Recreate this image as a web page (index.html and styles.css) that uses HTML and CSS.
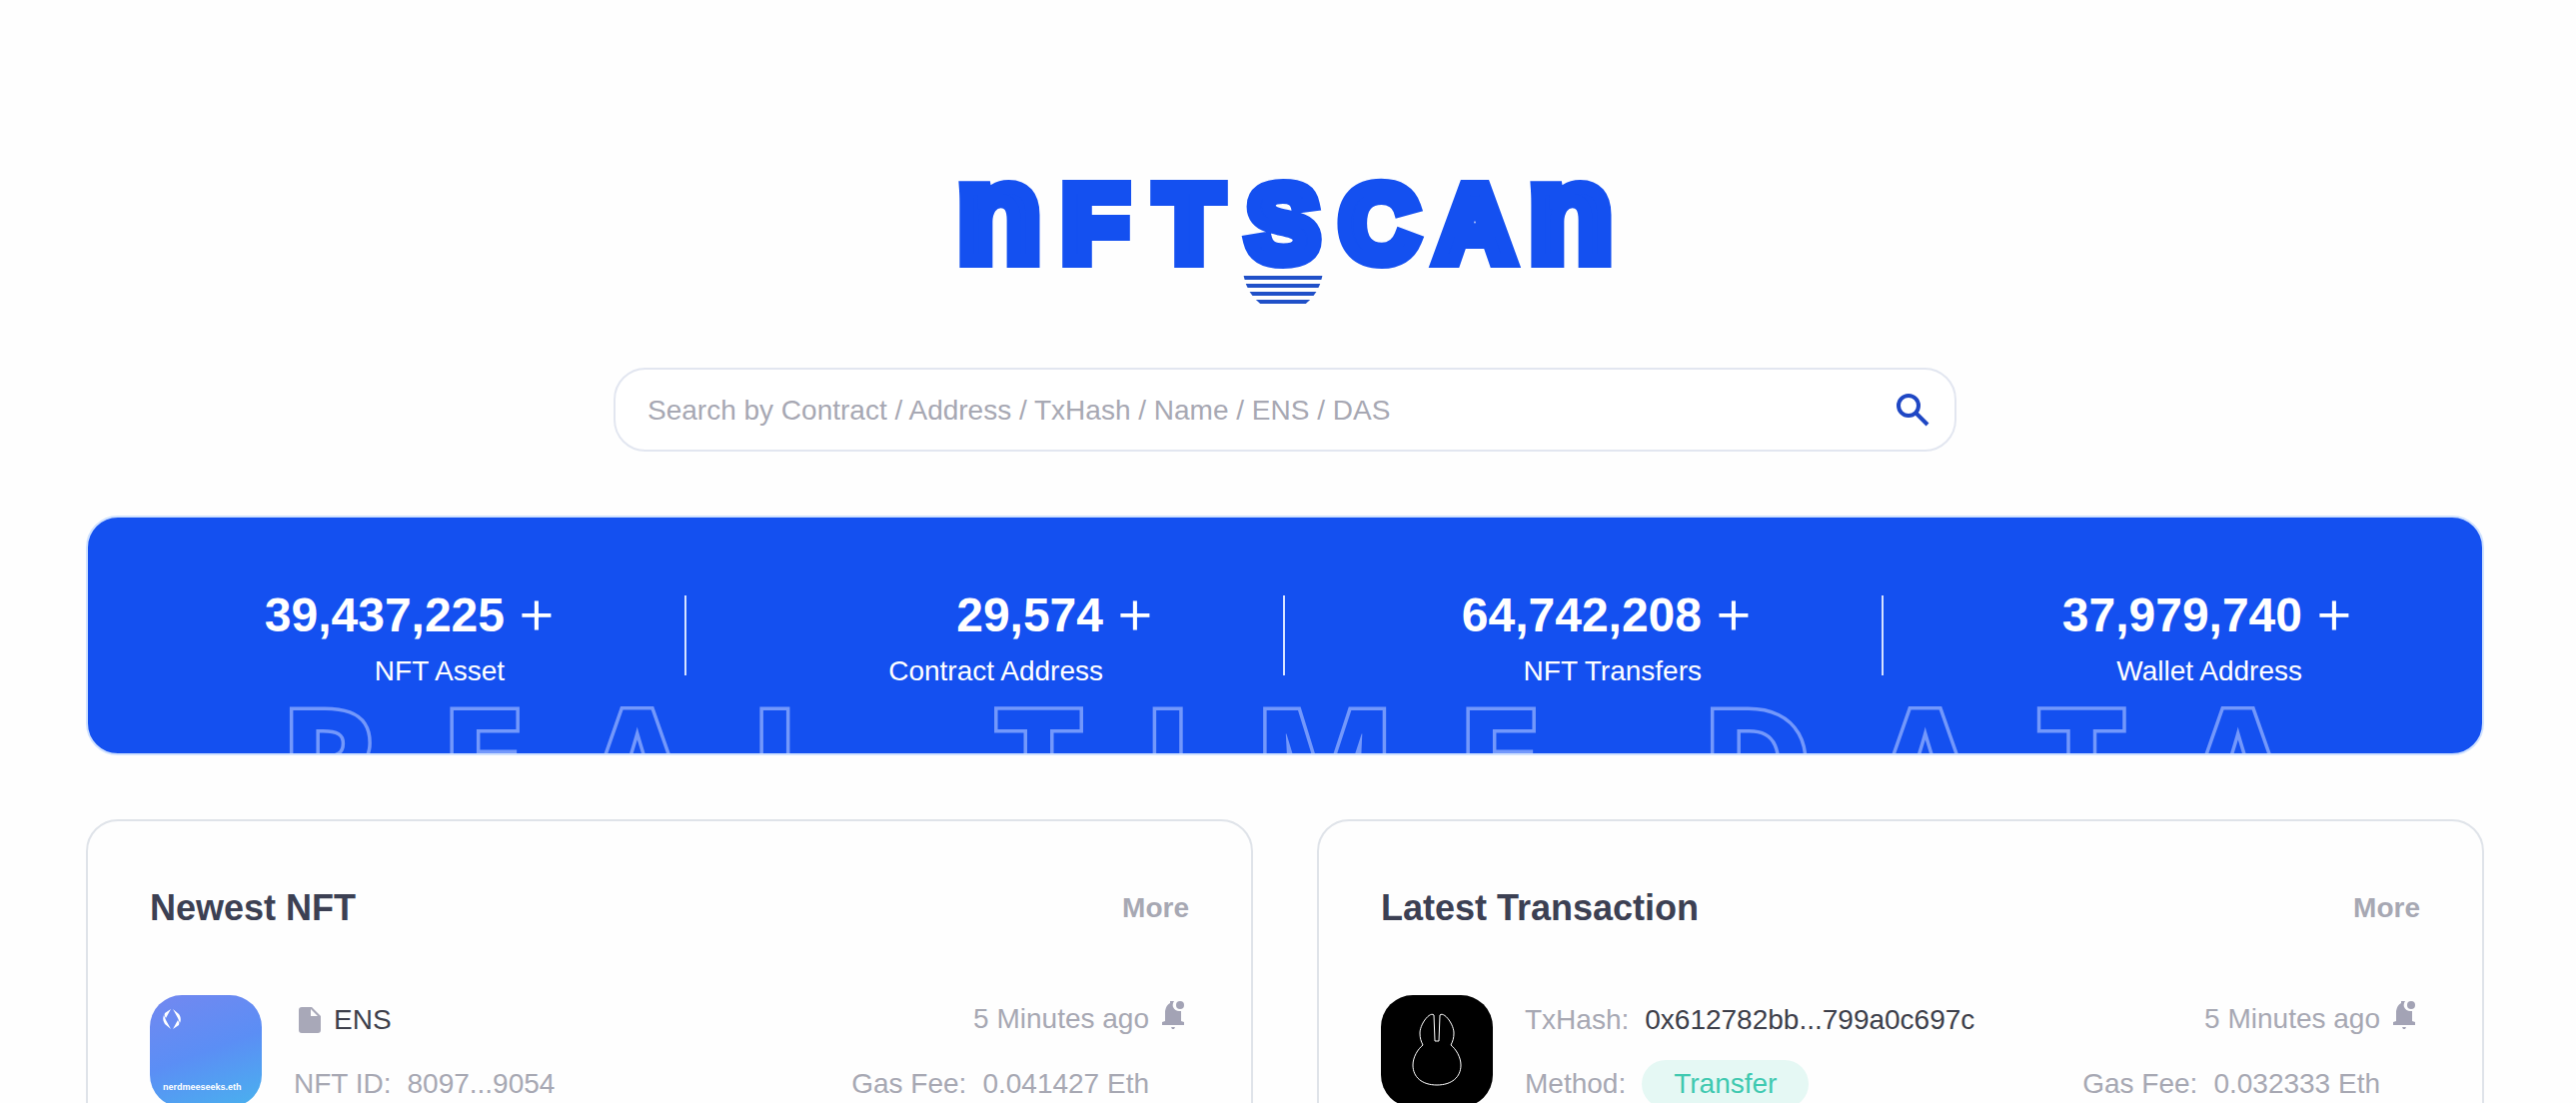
FILE: index.html
```html
<!DOCTYPE html>
<html lang="en">
<head>
    <meta charset="UTF-8">
    <meta name="viewport" content="width=device-width, initial-scale=1.0">
    <title>NFTScan</title>
    <link rel="stylesheet" href="styles.css">
</head>
<body>
    <main class="page">
        <h1 class="logo">
            <svg class="logo-svg" width="652" height="124" viewBox="0 0 652 124" role="img" aria-label="NFTScan">
                <defs>
                    <clipPath id="sun">
                        <ellipse cx="324" cy="88" rx="40" ry="44" />
                    </clipPath>
                </defs>
                <g class="logo-letters">
                    <text class="logo-arch" x="40" y="81">n</text>
                    <text x="136" y="81">F</text>
                    <text x="230" y="81">T</text>
                    <text x="324" y="81">S</text>
                    <text x="420" y="81">C</text>
                    <text x="516" y="81">A</text>
                    <text class="logo-arch" x="612" y="81">n</text>
                </g>
                <g clip-path="url(#sun)" fill="#2050c8">
                    <rect x="284" y="96" width="80" height="4" />
                    <rect x="284" y="104" width="80" height="4" />
                    <rect x="284" y="112" width="80" height="4" />
                    <rect x="284" y="120" width="80" height="4" />
                </g>
            </svg>
        </h1>

        <form class="search">
            <input class="search-input" type="text" aria-label="Search" placeholder="Search by Contract / Address / TxHash / Name / ENS / DAS">
            <button class="search-button" type="button" aria-label="Search">
                <svg width="36" height="36" viewBox="0 0 36 36" fill="none" stroke="#1f47c4" stroke-width="4">
                    <circle cx="14" cy="14" r="10" />
                    <path d="M21 21 L33 33" />
                </svg>
            </button>
        </form>

        <section class="stats">
            <div class="stats-backdrop">REAL TIME DATA</div>
            <div class="stat">
                <strong class="stat-number">39,437,225</strong>
                <span class="stat-plus">+</span>
                <span class="stat-label">NFT Asset</span>
            </div>
            <div class="stat">
                <strong class="stat-number">29,574</strong>
                <span class="stat-plus">+</span>
                <span class="stat-label">Contract Address</span>
            </div>
            <div class="stat">
                <strong class="stat-number">64,742,208</strong>
                <span class="stat-plus">+</span>
                <span class="stat-label">NFT Transfers</span>
            </div>
            <div class="stat">
                <strong class="stat-number">37,979,740</strong>
                <span class="stat-plus">+</span>
                <span class="stat-label">Wallet Address</span>
            </div>
        </section>

        <div class="cards">
            <section class="card">
                <div class="card-header">
                    <h2>Newest NFT</h2>
                    <a class="more" href="#">More</a>
                </div>
                <div class="item">
                    <div class="avatar avatar-ens">
                        <svg width="18" height="20" viewBox="0 0 18 20" fill="#fff">
                            <path d="M8 0 L3 9 Q1 6 2 4 Z" />
                            <path d="M1 6 L3 11 L8 20 L2 15 Q-1 11 1 6 Z" />
                            <path d="M10 0 L16 5 Q19 9 17 14 L15 9 Z" />
                            <path d="M10 20 L15 11 Q17 14 16 16 Z" />
                        </svg>
                        <span>nerdmeeseeks.eth</span>
                    </div>
                    <div class="item-main">
                        <div class="line line-token">
                            <svg width="22" height="26" viewBox="0 0 22 26">
                                <path fill="#a8a8b8" fill-rule="evenodd" d="M3 0 H13 L22 9 V23 Q22 26 19 26 H3 Q0 26 0 23 V3 Q0 0 3 0 Z M12 2 V9 H19 Z" />
                            </svg>
                            <a class="value" href="#">ENS</a>
                        </div>
                        <div class="line"><span>NFT ID:</span><span>8097...9054</span></div>
                    </div>
                    <div class="item-side">
                        <div class="line">5 Minutes ago</div>
                        <div class="line"><span>Gas Fee:</span><span>0.041427 Eth</span></div>
                    </div>
                    <button class="bell" type="button" aria-label="Notify">
                        <svg width="24" height="28" viewBox="0 0 24 28" fill="#a3a3b5">
                            <path d="M9 0 H13 Q11 3 12 6 Q14 10 18 10 H20 V20 L23 21 V24 H1 V21 L4 20 V10 Q5 4 9 2 Z" />
                            <circle cx="19" cy="4" r="4" />
                            <path d="M10 26 H14 L13 28 H11 Z" />
                        </svg>
                    </button>
                </div>
            </section>

            <section class="card">
                <div class="card-header">
                    <h2>Latest Transaction</h2>
                    <a class="more" href="#">More</a>
                </div>
                <div class="item">
                    <div class="avatar avatar-bunny">
                        <svg width="112" height="112" viewBox="0 0 112 112" fill="none" stroke="#fff" stroke-width="1">
                            <path d="M54 46 H58 L59 20 C63 16 73 29 73 38 C73 43 72 46 70 50 C75 54 80 62 80 70 C80 82 71 90 56 90 C41 90 32 82 32 70 C32 62 37 54 42 50 C40 46 39 43 39 38 C39 29 49 16 53 20 Z" />
                        </svg>
                    </div>
                    <div class="item-main">
                        <div class="line"><span>TxHash:</span><a class="value" href="#">0x612782bb...799a0c697c</a></div>
                        <div class="line"><span>Method:</span><span class="tag">Transfer</span></div>
                    </div>
                    <div class="item-side">
                        <div class="line">5 Minutes ago</div>
                        <div class="line"><span>Gas Fee:</span><span>0.032333 Eth</span></div>
                    </div>
                    <button class="bell" type="button" aria-label="Notify">
                        <svg width="24" height="28" viewBox="0 0 24 28" fill="#a3a3b5">
                            <path d="M9 0 H13 Q11 3 12 6 Q14 10 18 10 H20 V20 L23 21 V24 H1 V21 L4 20 V10 Q5 4 9 2 Z" />
                            <circle cx="19" cy="4" r="4" />
                            <path d="M10 26 H14 L13 28 H11 Z" />
                        </svg>
                    </button>
                </div>
            </section>
        </div>
    </main>
</body>
</html>
```
FILE: styles.css
```css
* {
    box-sizing: border-box;
}

body {
    margin: 0;
    background-color: #fefefe;
    color: #a7a8b3;
    font-family: "Liberation Sans", Arial, sans-serif;
    font-size: 28px;
    line-height: 32px;
}

a {
    color: inherit;
    text-decoration: none;
}

button {
    padding: 0;
    border: none;
    background: none;
    cursor: pointer;
}

svg {
    display: block;
}

.page {
    height: 100vh;
    overflow: hidden;
    padding: 180px 92px 0 86px;
}

/* Logo */
.logo {
    display: flex;
    justify-content: center;
    margin: 0 0 64px;
}

.logo-svg {
    overflow: visible;
}

.logo-letters {
    fill: #1450f0;
    stroke: #1450f0;
    stroke-width: 14px;
    stroke-miterlimit: 2;
    font-size: 108px;
    font-weight: bold;
    text-anchor: middle;
}

.logo-arch {
    font-size: 138px;
}

/* Search */
.search {
    display: flex;
    align-items: center;
    width: 56%;
    height: 84px;
    margin: 0 auto 64px;
    padding: 0 24px 0 32px;
    border: 2px solid #e2e6f0;
    border-radius: 32px;
    background-color: #fff;
}

.search-input {
    flex: 1;
    padding: 2px 0 0;
    border: none;
    outline: none;
    background: none;
    font: inherit;
}

.search-input::placeholder {
    color: #a7a8b3;
}

/* Statistics banner */
.stats {
    position: relative;
    display: grid;
    grid-template-columns: repeat(4, 1fr);
    height: 240px;
    margin-bottom: 64px;
    padding-top: 78px;
    border: 2px solid #d0e2ff;
    border-radius: 32px;
    background-color: #1450f0;
    color: #fff;
    overflow: hidden;
}

.stat {
    position: relative;
    display: grid;
    grid-template-columns: 1fr 44px;
    grid-template-rows: 40px 32px;
    align-content: start;
    column-gap: 10px;
    row-gap: 20px;
    height: 80px;
    padding-right: 126px;
    text-align: right;
}

.stat:not(:last-child) {
    border-right: 2px solid #d6e2ff;
}

.stat-number {
    font-size: 48px;
    line-height: 40px;
}

.stat-plus {
    font-family: Inter, sans-serif;
    font-size: 64px;
    font-weight: 300;
    line-height: 30px;
    text-align: center;
}

/* Outlined caption, cut off by the lower edge of the banner */
.stats-backdrop {
    position: absolute;
    left: 0;
    right: 0;
    top: 168px;
    padding-left: 60px;
    color: #1450f0;
    font-family: "Open Sans", sans-serif;
    font-size: 152px;
    font-weight: bold;
    line-height: 152px;
    letter-spacing: 60px;
    text-align: center;
    white-space: nowrap;
    -webkit-text-stroke: 7px #7398fb;
    paint-order: stroke fill;
}

/* Cards */
.cards {
    display: grid;
    grid-template-columns: 1fr 1fr;
    gap: 64px;
}

.card {
    height: 600px;
    padding: 66px 62px;
    border: 2px solid #dfe3e9;
    border-radius: 32px;
}

.card-header {
    display: flex;
    justify-content: space-between;
    align-items: center;
    margin-bottom: 66px;
}

.card-header h2 {
    margin: 0;
    color: #3c4053;
    font-size: 36px;
    line-height: 42px;
}

.more {
    font-weight: bold;
}

.item {
    display: flex;
}

.avatar {
    width: 112px;
    height: 112px;
    margin-right: 32px;
    border-radius: 32px;
    overflow: hidden;
}

.avatar-ens {
    display: flex;
    flex-direction: column;
    justify-content: space-between;
    padding: 14px 13px;
    background: linear-gradient(160deg, #7388f0, #5b8ef5 50%, #49b2ee);
    color: #fff;
    font-size: 9px;
    font-weight: bold;
    line-height: 12px;
}

.avatar-bunny {
    background-color: #000;
}

.item-main {
    display: grid;
    grid-auto-rows: 50px;
    row-gap: 14px;
}

.item-side {
    display: grid;
    grid-auto-rows: 48px;
    row-gap: 17px;
    justify-items: end;
    margin-left: auto;
}

.line {
    display: flex;
    align-items: center;
    gap: 16px;
}

.line-token {
    gap: 13px;
    padding-left: 5px;
}

.value {
    color: #3d3f4a;
}

.tag {
    padding: 8px 32px;
    border-radius: 24px;
    background-color: #e5f8f4;
    color: #3fc9b0;
}

.bell {
    align-self: flex-start;
    margin: 6px 4px 0 12px;
}
```
